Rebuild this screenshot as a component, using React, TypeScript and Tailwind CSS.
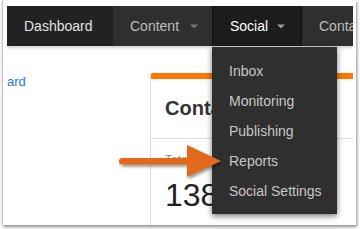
import React from 'react'

const font = { fontFamily: '"Liberation Sans", Arial, Helvetica, sans-serif' }

function Caret({ className }: { className?: string }) {
  return (
    <svg width="8" height="5" viewBox="0 0 8 5" className={className}>
      <path d="M0 0.5h8L4 4.5z" fill="currentColor" />
    </svg>
  )
}

const menuItems = ['Inbox', 'Monitoring', 'Publishing', 'Reports', 'Social Settings']

function Arrow() {
  return (
    <svg
      width="116"
      height="48"
      viewBox="0 0 116 48"
      className="pointer-events-none absolute left-[115px] top-[140px] z-30"
    >
      <defs>
        <filter id="arrowShadow" x="-10%" y="-20%" width="130%" height="160%">
          <feDropShadow dx="1.5" dy="2" stdDeviation="1.5" floodColor="#000" floodOpacity="0.45" />
        </filter>
      </defs>
      <g filter="url(#arrowShadow)" fill="#e2691d">
        <rect x="4" y="18" width="72" height="6.5" rx="3.2" />
        <path d="M72 5 L106 21 L72 37 Z" />
      </g>
    </svg>
  )
}

export default function App() {
  return (
    <div className="relative h-[229px] w-[360px] overflow-hidden bg-white" style={font}>
      {/* framed screenshot */}
      <div className="ml-[2px] h-[225px] w-[354px] border-l border-[#c4c4c4] bg-white pl-[4px] pr-[3px] pt-[6px] shadow-[1px_2px_3px_rgba(0,0,0,0.45)]">
        <div className="flex h-full flex-col overflow-hidden">
          {/* top nav */}
          <nav className="relative z-20 flex h-[40px] shrink-0 shadow-[0_2px_3px_rgba(0,0,0,0.18)]">
            <div className="flex w-[106px] shrink-0 items-center bg-[#222222] pl-[17px] text-[14px] text-[#e2e2e2]">
              Dashboard
            </div>
            <div className="flex w-[99px] shrink-0 items-center bg-[#2f2f2f] pl-[17px] text-[14px] text-[#bdbdbd]">
              Content
              <Caret className="ml-[11px] text-[#767676]" />
            </div>
            <div className="relative flex w-[90px] shrink-0 items-center border-x border-[#0e0e0e] bg-[#1c1c1c] pl-[17px] text-[14px] text-white">
              Social
              <Caret className="ml-[9px] text-[#9a9a9a]" />
              {/* dropdown */}
              <div className="absolute left-[-1px] top-[41px] w-[125px] bg-[#2f2f2f] pb-[8px] pt-[9px] shadow-[0_2px_6px_rgba(0,0,0,0.55)]">
                {menuItems.map((item) => (
                  <div key={item} className="flex h-[30px] items-center pl-[17px] text-[14px] text-[#c8c8c8]">
                    {item}
                  </div>
                ))}
              </div>
            </div>
            <div className="flex min-w-0 flex-1 items-center overflow-hidden whitespace-nowrap bg-[#2f2f2f] pl-[17px] text-[14px] text-[#bdbdbd]">
              Contacts
            </div>
          </nav>

          {/* page body */}
          <div className="flex flex-1">
            <div className="w-[143px] shrink-0 pt-[28px]">
              <div className="text-[13px] leading-[15px] text-[#2b78d6]">ard</div>
            </div>
            <div className="mt-[27px] min-w-0 flex-1 overflow-hidden rounded-tl-[4px] border-l border-[#dcdcdc] border-t-[6px] border-t-[#ff7700]">
              <div className="border-b border-[#dedede] pb-[18px] pl-[14px] pt-[18px]">
                <div className="w-[48px] overflow-hidden whitespace-nowrap text-[20px] font-bold leading-[23px] text-[#333333]">
                  Contacts
                </div>
              </div>
              <div className="pl-[14px] pt-[14px]">
                <div className="text-[12px] leading-[14px] text-[#999999]">Total</div>
                <div className="mt-[10px] text-[32px] leading-[37px] text-[#222222]">138</div>
              </div>
            </div>
          </div>
        </div>
      </div>
      <Arrow />
    </div>
  )
}
